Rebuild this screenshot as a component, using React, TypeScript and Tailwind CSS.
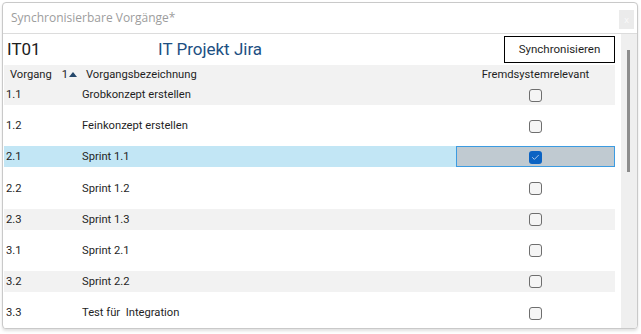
import { Check } from "lucide-react";

type Row = { id: string; name: string; checked?: boolean; selected?: boolean };

const rows: Row[] = [
  { id: "1.1", name: "Grobkonzept erstellen" },
  { id: "1.2", name: "Feinkonzept erstellen" },
  { id: "2.1", name: "Sprint 1.1", checked: true, selected: true },
  { id: "2.2", name: "Sprint 1.2" },
  { id: "2.3", name: "Sprint 1.3" },
  { id: "3.1", name: "Sprint 2.1" },
  { id: "3.2", name: "Sprint 2.2" },
  { id: "3.3", name: "Test für\u00a0 Integration" },
];

function Box({ checked }: { checked?: boolean }) {
  if (checked)
    return (
      <div className="w-[13px] h-[13px] rounded-[3px] bg-[#0b63c3] flex items-center justify-center">
        <Check size={9} strokeWidth={2} className="text-[#dfe9f5]" />
      </div>
    );
  return <div className="w-[13px] h-[13px] rounded-[3px] border border-[#6e6e6e] bg-[#f5f5f5]" />;
}

export default function App() {
  return (
    <div className="w-[641px] h-[334px] bg-white pl-[2px] pt-[2px] overflow-hidden font-['Roboto',sans-serif] text-[11.2px] text-[#1f1f1f]">
      <div className="w-[636px] h-[327px] border border-[#c9c9c9] rounded-[4px] bg-white flex flex-col overflow-hidden shadow-[0_2px_3px_rgba(0,0,0,0.12)]">
        <div className="h-[31px] shrink-0 border-b border-[#dcdcdc] flex items-center pl-[8px] pr-[3px]">
          <span className="flex-1 font-['Open_Sans',sans-serif] text-[12px] text-[#9d9d9d]">Synchronisierbare Vorgänge*</span>
          <div className="w-[15px] h-[19px] mt-[3px] bg-[#ebebeb] flex items-center justify-center text-[9px] leading-none text-[#fafafa] font-['Open_Sans',sans-serif]">x</div>
        </div>
        <div className="flex flex-1 min-h-0">
          <div className="flex-1 min-w-0 pl-[1px] pr-[6px] overflow-hidden">
            <div className="h-[31px] flex items-center">
              <span className="w-[154px] pl-[3px] text-[17px] text-[#202020]">IT01</span>
              <span className="flex-1 text-[17px] text-[#1d4f82]">IT Projekt Jira</span>
              <button className="w-[111px] h-[27px] border border-black bg-white text-[11.5px] text-[#1f1f1f]">Synchronisieren</button>
            </div>
            <div className="grid grid-cols-[78px_1fr_159px] h-[19px] items-center pt-[1px] bg-[#f2f2f2]">
              <div className="pl-[6px] flex items-center">
                <span>Vorgang</span>
                <span className="ml-[10px]">1</span>
                <svg width="8" height="5" viewBox="0 0 8 5" className="ml-[1px] mt-[-1px]"><path d="M0 5L4 0L8 5Z" fill="#24476b" /></svg>
              </div>
              <div className="pl-[4px]">Vorgangsbezeichnung</div>
              <div className="text-center">Fremdsystemrelevant</div>
            </div>
            {rows.map((r, i) => (
              <div
                key={r.id}
                className={`grid grid-cols-[78px_1fr_159px] items-stretch ${i % 2 === 0 ? "h-[21px]" : "h-[41.3px]"} ${r.selected ? "bg-[#c2e6f5]" : i % 2 === 0 ? "bg-[#f2f2f2]" : "bg-white"}`}
              >
                <div className="pl-[2px] pt-[2px] flex items-center">{r.id}</div>
                <div className="pt-[2px] flex items-center whitespace-pre">{r.name}</div>
                <div className={`pt-[1px] flex items-center justify-center ${r.selected ? "bg-[#c0cad1] border border-[#3c9be1]" : ""}`}>
                  <Box checked={r.checked} />
                </div>
              </div>
            ))}
          </div>
          <div className="w-[16px] shrink-0 bg-[#efefef] pt-[16px] pl-[6px]">
            <div className="w-[3px] h-[122px] bg-[#8c8c8c]" />
          </div>
        </div>
      </div>
    </div>
  );
}
